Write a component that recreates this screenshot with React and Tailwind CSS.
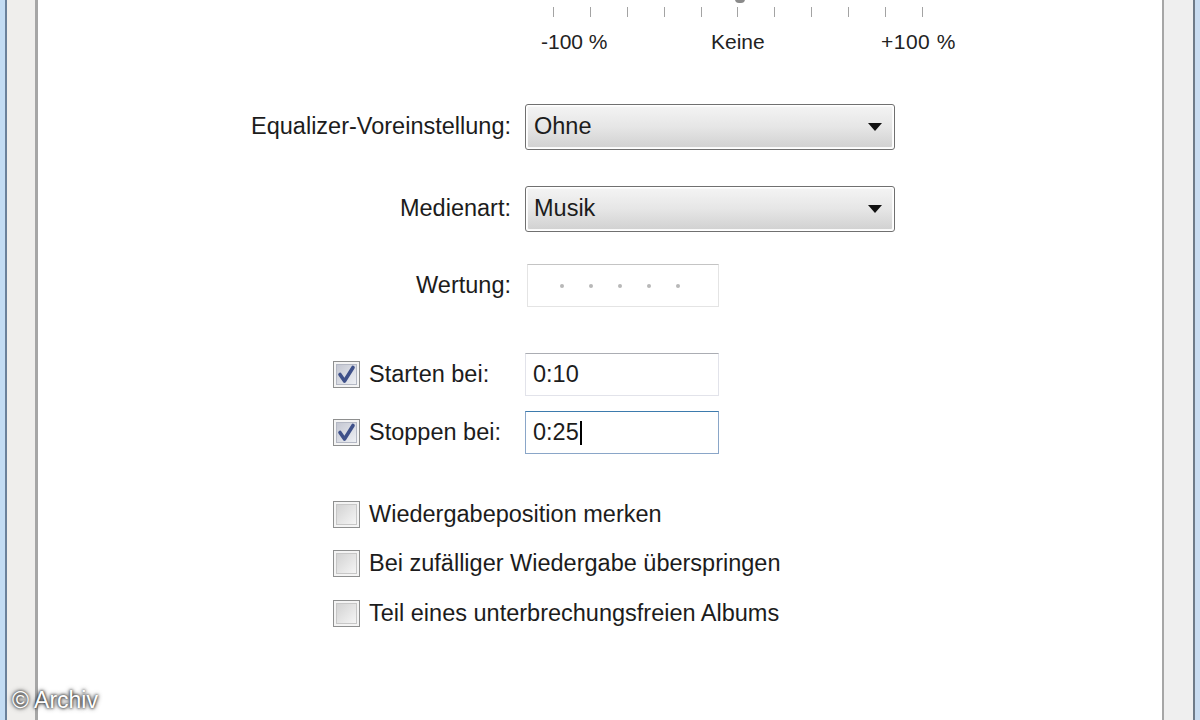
import React from 'react';

const font = "font-['Liberation_Sans',Arial,sans-serif]";

const Ticks = () => {
  const ticks = Array.from({ length: 11 }, (_, i) => i);
  return (
    <div className="relative h-[17px]">
      {/* slider thumb, only its tip is visible */}
      <div className="absolute left-[697px] top-[-6px] w-[10px] h-[9px] rounded-b-[4px] bg-[#8a8a8a]" />
      <div className="flex pl-[515px] pt-[7px] gap-[35.9px]">
        {ticks.map((t) => (
          <div key={t} className="w-px h-[10px] bg-[#a3a3a3]" />
        ))}
      </div>
    </div>
  );
};

const Dropdown = ({ value }) => (
  <div className="w-[370px] h-[46px] rounded-[3px] border border-[#707070] p-px">
    <div className="h-full rounded-[2px] border border-[#fafafa] bg-gradient-to-b from-[#f3f3f3] via-[#e6e6e6] to-[#d2d2d2] flex items-center justify-between pl-[6px] pr-[10px]">
      <span className="text-[23.5px] text-[#1c1c1c]">{value}</span>
      <svg width="14" height="8" viewBox="0 0 14 8">
        <path d="M0 0 L14 0 L7 8 Z" fill="#111" />
      </svg>
    </div>
  </div>
);

const TextBox = ({ value, focused }) => (
  <div
    className={`w-[194px] h-[43px] border flex items-center pl-[7px] ${
      focused
        ? 'border-[#8aa6c8] border-t-[#3d7bad] bg-white'
        : 'border-[#e2e3ea] border-t-[#abadb3] bg-white'
    }`}
  >
    <span className="text-[23.5px] text-[#1c1c1c]">{value}</span>
    {focused && <div className="w-[2px] h-[24px] bg-black ml-[1px]" />}
  </div>
);

const Check = ({ checked }) => (
  <div className="w-[27px] h-[27px] border border-[#8e8f8f] p-[2px] bg-[#f4f4f4] shrink-0">
    <div
      className={`w-full h-full border ${
        checked
          ? 'border-[#b4b8c4] bg-gradient-to-br from-[#c4c7d2] to-[#eef0f4]'
          : 'border-[#c7c7c7] bg-gradient-to-br from-[#d3d3d3] to-[#f5f5f5]'
      } flex items-center justify-center`}
    >
      {checked && (
        <svg width="19" height="19" viewBox="0 0 19 19">
          <path d="M3 9.5 L7.5 16 L16 2.5" fill="none" stroke="#3f518a" strokeWidth="3.6" strokeLinejoin="round" strokeLinecap="round" />
        </svg>
      )}
    </div>
  </div>
);

const LabelRow = ({ label, children, className }) => (
  <div className={`flex items-center ${className}`}>
    <div className="w-[474px] text-right text-[23.5px] text-[#1c1c1c] pr-[1px]">{label}</div>
    <div className="ml-[13px]">{children}</div>
  </div>
);

const CheckOption = ({ label, className }) => (
  <div className={`flex items-center pl-[295px] ${className}`}>
    <Check />
    <span className="ml-[9px] text-[23.5px] leading-[27px] text-[#1c1c1c]">{label}</span>
  </div>
);

export default function App() {
  return (
    <div className={`relative w-[1200px] h-[720px] flex overflow-hidden bg-white ${font}`}>
      {/* left window frame */}
      <div className="w-[5px] bg-[#c3dcf3]" />
      <div className="w-[2px] bg-[#6a819a]" />
      <div className="w-[28px] bg-[#efeeec]" />
      <div className="w-[3px] bg-[#a6a6a6]" />

      {/* content */}
      <div className="flex-1 flex flex-col bg-white">
        <Ticks />
        <div className="relative h-[24px] mt-[13px] text-[21px] leading-[24px] text-[#222]">
          <span className="absolute left-[503px]">-100 %</span>
          <span className="absolute left-[673px]">Keine</span>
          <span className="absolute left-[843px] tracking-[0.5px]">+100 %</span>
        </div>

        <LabelRow label="Equalizer-Voreinstellung:" className="mt-[50px]">
          <Dropdown value="Ohne" />
        </LabelRow>

        <LabelRow label="Medienart:" className="mt-[36px]">
          <Dropdown value="Musik" />
        </LabelRow>

        <LabelRow label="Wertung:" className="mt-[32px]">
          <div className="ml-[2px] w-[192px] h-[43px] border border-[#e4e4e4] border-t-[#c4c4c4] flex items-center pl-[32px] gap-[25px]">
            {[0, 1, 2, 3, 4].map((i) => (
              <div key={i} className="w-[4px] h-[4px] rounded-full bg-[#b8b8b8]" />
            ))}
          </div>
        </LabelRow>

        <div className="flex items-center pl-[295px] mt-[46px]">
          <div className="w-[192px] flex items-center">
            <Check checked />
            <span className="ml-[9px] text-[23.5px] text-[#1c1c1c]">Starten bei:</span>
          </div>
          <TextBox value="0:10" />
        </div>

        <div className="flex items-center pl-[295px] mt-[15px]">
          <div className="w-[192px] flex items-center">
            <Check checked />
            <span className="ml-[9px] text-[23.5px] text-[#1c1c1c]">Stoppen bei:</span>
          </div>
          <TextBox value="0:25" focused />
        </div>

        <CheckOption label="Wiedergabeposition merken" className="mt-[47px]" />
        <CheckOption label="Bei zufälliger Wiedergabe überspringen" className="mt-[22px]" />
        <CheckOption label="Teil eines unterbrechungsfreien Albums" className="mt-[23px]" />
      </div>

      {/* right window frame */}
      <div className="w-[2px] bg-[#a6a6a6]" />
      <div className="w-[29px] bg-[#efefef]" />
      <div className="w-[2px] bg-[#6f7b88]" />
      <div className="w-[5px] bg-[#c9dcf0]" />

      {/* watermark */}
      <div className="absolute left-[12px] top-[683px] text-[23px] text-white [text-shadow:0_0_3px_#000,0_0_5px_#333]">
        © Archiv
      </div>
    </div>
  );
}
